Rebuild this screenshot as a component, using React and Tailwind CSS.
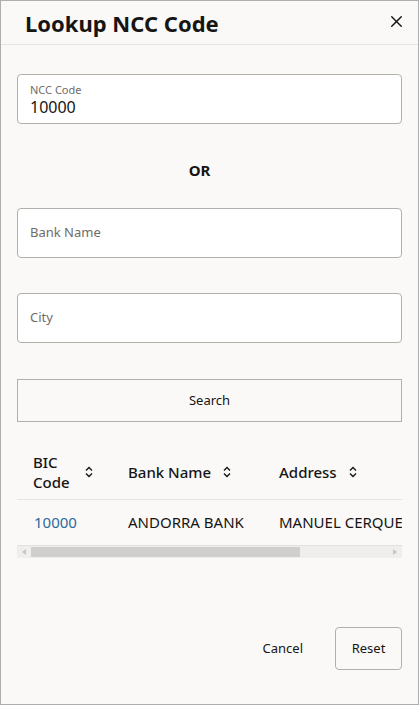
import { X } from 'lucide-react'

function SortIcon() {
  return (
    <svg width="12" height="14" viewBox="0 0 12 14" fill="none" stroke="#161513" strokeWidth="1.4" className="shrink-0">
      <path d="M3 5.5 L6 2.5 L9 5.5" />
      <path d="M3 8.5 L6 11.5 L9 8.5" />
    </svg>
  )
}

function Field({ label, value }) {
  if (value) {
    return (
      <div className="h-[50px] rounded-[4px] border border-[#b3b0ab] bg-white px-[12px] pt-[8px]">
        <div className="text-[11px] leading-[14px] text-[#6f6c68]">{label}</div>
        <div className="text-[16px] leading-[20px] text-[#161513]">{value}</div>
      </div>
    )
  }
  return (
    <div className="h-[50px] rounded-[4px] border border-[#b3b0ab] bg-white px-[12px] flex items-center">
      <span className="text-[13px] text-[#6f6c68]">{label}</span>
    </div>
  )
}

export default function App() {
  return (
    <div
      className="w-[419px] h-[705px] border border-[#b0aeab] bg-[#faf9f8] flex flex-col text-[#161513]"
      style={{ fontFamily: '"Noto Sans", "Open Sans", sans-serif' }}
    >
      {/* Header */}
      <div className="h-[44px] shrink-0 border-b border-[#e6e4e1] flex items-center justify-between pl-[24px] pr-[12px]">
        <h1 className="text-[22px] font-bold leading-none">Lookup NCC Code</h1>
        <X className="w-[19px] h-[19px] -mt-[3px]" strokeWidth={1.8} />
      </div>

      {/* Body */}
      <div className="flex-1 px-[16px] flex flex-col">
        <div className="mt-[29px]">
          <Field label="NCC Code" value="10000" />
        </div>

        <div className="mt-[36px] mb-[28px] h-[20px] pr-[20px] flex items-center justify-center text-[15px] font-bold">OR</div>

        <Field label="Bank Name" />
        <div className="mt-[35px]">
          <Field label="City" />
        </div>

        <button className="mt-[36px] h-[43px] w-full border border-[#b3b0ab] bg-[#faf9f8] text-[13px] text-[#161513]">
          Search
        </button>

        {/* Table */}
        <div className="mt-[28px] overflow-hidden">
          <div className="flex h-[50px] items-center pb-[6px] border-b border-[#e6e4e1] text-[15px] leading-[20px] font-medium">
            <div className="w-[111px] shrink-0 pl-[16px] flex items-center gap-[13px]">
              <span>BIC<br />Code</span>
              <SortIcon />
            </div>
            <div className="w-[151px] shrink-0 flex items-center gap-[10px]">
              <span>Bank Name</span>
              <SortIcon />
            </div>
            <div className="shrink-0 flex items-center gap-[10px]">
              <span>Address</span>
              <SortIcon />
            </div>
          </div>
          <div className="flex h-[45px] items-center text-[15px] whitespace-nowrap">
            <div className="w-[111px] shrink-0 pl-[17px] text-[#2b6a9a]">10000</div>
            <div className="w-[151px] shrink-0">ANDORRA BANK</div>
            <div className="shrink-0">MANUEL CERQUEDA I ESCALER 6</div>
          </div>
          {/* scrollbar */}
          <div className="h-[13px] bg-[#efeeec] border-t border-[#e3e1de] flex items-center">
            <div className="w-[14px] flex items-center justify-center">
              <svg width="4" height="6" viewBox="0 0 4 6"><path d="M4 0 L0 3 L4 6 Z" fill="#c8c6c3" /></svg>
            </div>
            <div className="w-[269px] h-[10px] bg-[#d0cfcd]" />
            <div className="flex-1" />
            <div className="w-[14px] flex items-center justify-center">
              <svg width="4" height="6" viewBox="0 0 4 6"><path d="M0 0 L4 3 L0 6 Z" fill="#c8c6c3" /></svg>
            </div>
          </div>
        </div>

        {/* Footer */}
        <div className="mt-[69px] flex items-center justify-end gap-[32px]">
          <span className="text-[13px]">Cancel</span>
          <button className="h-[43px] w-[67px] rounded-[4px] border border-[#b3b0ab] bg-[#faf9f8] text-[13px]">
            Reset
          </button>
        </div>
      </div>
    </div>
  )
}
